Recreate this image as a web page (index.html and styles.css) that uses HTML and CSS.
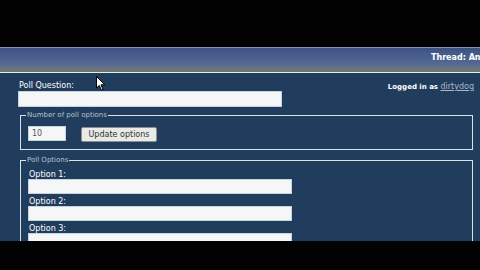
FILE: index.html
```html
<!DOCTYPE html>
<html lang="en">
<head>
    <meta charset="UTF-8">
    <title>Poll</title>
    <link rel="stylesheet" href="styles.css">
</head>
<body>

    <div class="topbar"></div>

    <div class="header">
        <span class="thread">Thread: Another poll test</span>
    </div>
    <div class="band"></div>

    <div class="content">
        <div class="row-top">
            <div class="question">
                <label class="label">Poll Question:</label>
                <input type="text" class="field wide">
            </div>
            <div class="login">Logged in as <a href="#">dirtydog</a></div>
        </div>

        <fieldset class="box">
            <legend>Number of poll options</legend>
            <div class="count-row">
                <input type="text" class="field small" value="10">
                <button class="btn">Update options</button>
            </div>
        </fieldset>

        <fieldset class="box options">
            <legend>Poll Options</legend>
            <label class="label">Option 1:</label>
            <input type="text" class="field opt">
            <label class="label">Option 2:</label>
            <input type="text" class="field opt">
            <label class="label">Option 3:</label>
            <input type="text" class="field opt">
        </fieldset>

        <svg class="cursor" width="10" height="16" viewBox="0 0 10 16">
            <path d="M0.5 0.5 L0.5 12 L3.3 9.4 L5.4 14.2 L7 13.5 L5 8.8 L8.8 8.8 Z" fill="#fff" stroke="#000" stroke-width="1"/>
        </svg>
    </div>

    <div class="bottombar"></div>

</body>
</html>
```

FILE: styles.css
```css
body {
    margin: 0;
    padding: 0;
    background: #000;
    font-family: "DejaVu Sans", Verdana, sans-serif;
    font-size: 8px;
    color: #fff;
    overflow: hidden;
}

.topbar {
    height: 47px;
    background: #020202;
}

.header {
    height: 19px;
    border-top: 1px solid #8090b8;
    background: linear-gradient(#3c5283, #5a6d98);
    padding-left: 431px;
    white-space: nowrap;
    overflow: hidden;
    display: flex;
    align-items: center;
}

.thread {
    font-weight: bold;
    font-size: 8px;
    color: #fff;
}

.band {
    height: 5px;
    background: #6c7571;
    border-bottom: 1px solid #e4eeec;
}

.content {
    position: relative;
    height: 168px;
    background: #213d5d;
    padding: 0 6px 0 18px;
    overflow: hidden;
}

.row-top {
    display: flex;
    justify-content: space-between;
    padding-top: 8px;
}

.label {
    display: block;
    color: #fff;
    height: 9px;
    line-height: 9px;
    padding-left: 1px;
}

.question .label {
    margin-bottom: 1px;
}

.login {
    font-weight: bold;
    font-size: 7px;
    padding-top: 1px;
    color: #fff;
}

.login a {
    font-weight: normal;
    font-size: 8px;
    color: #a9b8c8;
}

.field {
    display: block;
    box-sizing: border-box;
    height: 16px;
    margin: 0;
    border: 1px solid #c8d2dc;
    background: #f4f6f8;
    font-family: "DejaVu Sans", Verdana, sans-serif;
    font-size: 8px;
    color: #555;
    padding: 0 3px;
}

.wide {
    width: 264px;
}

.box {
    margin: 4px 0 0 2px;
    padding: 0 0 0 7px;
    width: 453px;
    box-sizing: border-box;
    border: 1px solid #d6e2ec;
    border-radius: 0;
}

.box legend {
    color: #b4c2d0;
    font-size: 7px;
    padding: 0 1px;
    margin-left: -2px;
}

.count-row {
    display: flex;
    gap: 15px;
    padding: 7px 0 7px;
}

.small {
    width: 38px;
    height: 15px;
}

.btn {
    height: 15px;
    width: 76px;
    margin-top: 1px;
    padding: 0;
    background: #e9e9e6;
    border: 1px solid #8a8f94;
    border-radius: 2px;
    font-family: "DejaVu Sans", Verdana, sans-serif;
    font-size: 8px;
    color: #333;
}

.options {
    margin-top: 6px;
    padding-top: 7px;
}

.opt {
    width: 264px;
    height: 15px;
    margin-bottom: 4px;
}

.options .label {
    height: 8px;
    line-height: 8px;
}

.cursor {
    position: absolute;
    left: 96px;
    top: 3px;
}

.bottombar {
    height: 40px;
    background: #020202;
}
```
